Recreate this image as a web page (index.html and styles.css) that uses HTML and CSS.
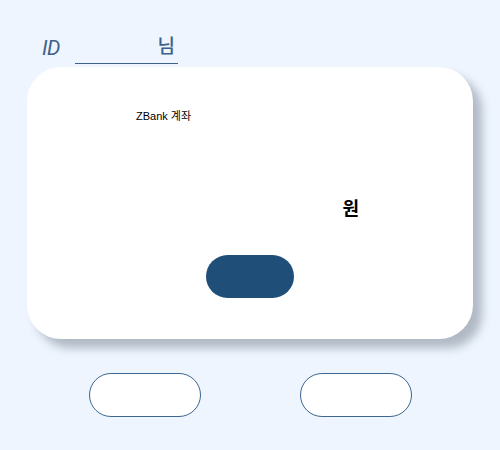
FILE: index.html
```html
<!DOCTYPE html>
<html lang="ko">
<head>
<meta charset="utf-8">
<link rel="stylesheet" href="styles.css">
</head>
<body>
<div class="page">
  <div class="header">
    <span class="id">ID</span>
    <span class="field"><span class="nim">님</span></span>
  </div>
  <div class="card">
    <div class="account">ZBank 계좌</div>
    <div class="amount"><span class="won">원</span></div>
    <div class="action"><button class="primary"></button></div>
  </div>
  <div class="buttons">
    <button class="outline"></button>
    <button class="outline"></button>
  </div>
</div>
</body>
</html>
```

FILE: styles.css
```css
html, body {
  margin: 0;
  padding: 0;
  background: #eef5fe;
  font-family: "Liberation Sans", "Noto Sans CJK KR", sans-serif;
}
.page {
  width: 500px;
  height: 450px;
  box-sizing: border-box;
  padding-top: 34px;
}
.header {
  display: flex;
  align-items: flex-start;
  padding-left: 42px;
  height: 29px;
  color: #3d6189;
}
.id {
  font-family: Roboto, "Liberation Sans", sans-serif;
  font-size: 21px;
  font-style: italic;
  font-weight: 400;
  letter-spacing: -0.5px;
  line-height: 24px;
  width: 33px;
  margin-top: 2px;
}
.field {
  width: 103px;
  height: 30px;
  border-bottom: 1px solid #3d6189;
  display: flex;
  justify-content: flex-end;
  align-items: flex-start;
  box-sizing: border-box;
}
.nim {
  font-family: "Noto Sans CJK KR", sans-serif;
  font-size: 19px;
  font-weight: 500;
  line-height: 22px;
  margin-right: 3px;
}
.card {
  margin: 4px 27px 0;
  height: 272px;
  background: #fff;
  border-radius: 34px;
  box-shadow: 9px 9px 10px rgba(60, 75, 90, 0.35);
  box-sizing: border-box;
  padding-top: 42px;
  display: flex;
  flex-direction: column;
}
.account {
  padding-left: 109px;
  font-size: 11px;
  line-height: 14px;
  color: #000;
}
.amount {
  display: flex;
  justify-content: flex-end;
  padding-right: 114px;
  margin-top: 72px;
}
.won {
  font-family: "Noto Sans CJK KR", sans-serif;
  font-weight: bold;
  font-size: 18px;
  line-height: 24px;
  color: #000;
}
.action {
  display: flex;
  justify-content: center;
  margin-top: 36px;
}
.primary {
  width: 88px;
  height: 43px;
  border: none;
  border-radius: 22px;
  background: #1f4e79;
  padding: 0;
}
.buttons {
  display: flex;
  justify-content: center;
  gap: 99px;
  margin-top: 34px;
}
.outline {
  width: 112px;
  height: 44px;
  border: 1px solid #3d6690;
  border-radius: 22px;
  background: #fff;
  padding: 0;
}
```
